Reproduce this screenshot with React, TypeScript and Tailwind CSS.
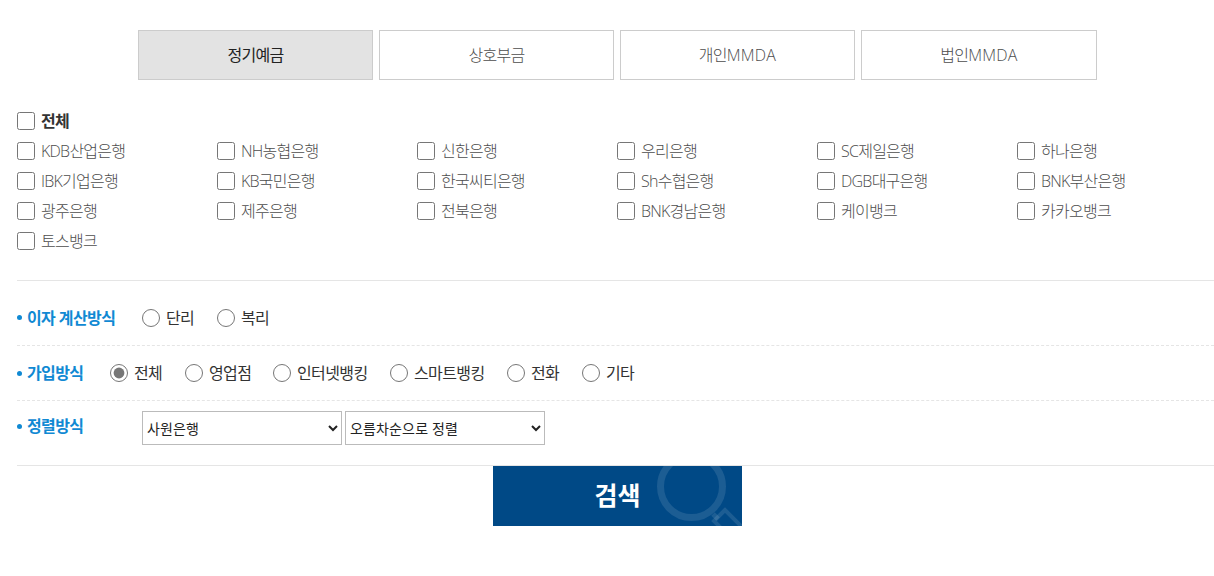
const FONT = "font-['Open_Sans','Noto_Sans_CJK_KR',sans-serif]"

const TABS = [
  { name: '정기예금' },
  { name: '상호부금' },
  { name: '개인', latin: 'MMDA' },
  { name: '법인', latin: 'MMDA' },
]

const BANKS = [
  'KDB산업은행', 'NH농협은행', '신한은행', '우리은행', 'SC제일은행', '하나은행',
  'IBK기업은행', 'KB국민은행', '한국씨티은행', 'Sh수협은행', 'DGB대구은행', 'BNK부산은행',
  '광주은행', '제주은행', '전북은행', 'BNK경남은행', '케이뱅크', '카카오뱅크',
  '토스뱅크',
]

const JOIN_TYPES = [
  { label: '전체', width: 'w-[75px]' },
  { label: '영업점', width: 'w-[88px]' },
  { label: '인터넷뱅킹', width: 'w-[117px]' },
  { label: '스마트뱅킹', width: 'w-[117px]' },
  { label: '전화', width: 'w-[75px]' },
  { label: '기타', width: 'w-[60px]' },
]

function Check({ label, strong }: { label: string; strong?: boolean }) {
  return (
    <label className="flex h-[30px] items-center">
      <input type="checkbox" className="m-0 h-[18px] w-[18px] shrink-0" />
      <span className={strong ? 'ml-[6px] font-bold text-[#333]' : 'ml-[6px] font-light text-[#4d4d4d]'}>{label}</span>
    </label>
  )
}

function Radio({ name, label, width, checked }: { name: string; label: string; width: string; checked?: boolean }) {
  return (
    <label className={`flex items-center ${width}`}>
      <input type="radio" name={name} defaultChecked={checked} className="m-0 h-[18px] w-[18px] shrink-0 accent-[#767676]" />
      <span className="ml-[6px] tracking-[-0.6px] text-[#333]">{label}</span>
    </label>
  )
}

function RowTitle({ children }: { children: string }) {
  return (
    <div className="flex items-center font-bold tracking-[-0.6px] text-[#1089d3]">
      <span className="mr-[5px] h-[5px] w-[5px] rounded-full bg-[#1089d3]" />
      {children}
    </div>
  )
}

export default function App() {
  return (
    <div className={`${FONT} h-[576px] w-[1214px] overflow-hidden bg-white pl-[17px] text-[16px] leading-[24px] tracking-[-0.75px]`}>
      <div className="flex gap-[6px] pl-[121px] pt-[30px]">
        {TABS.map((tab, idx) => (
          <div
            key={tab.name}
            className={`flex h-[50px] items-center justify-center border border-[#ccc] ${
              idx === 0 ? 'w-[235px] bg-[#e3e3e3] text-[#222]' : idx === 3 ? 'w-[236px] font-light text-[#4d4d4d]' : 'w-[235px] font-light text-[#4d4d4d]'
            }`}
          >
            {tab.name}
            {tab.latin && <span className="tracking-[0.2px]">{tab.latin}</span>}
          </div>
        ))}
      </div>

      <div className="mt-[26px] border-b border-[#e5e5e5] pb-[24px]">
        <Check label="전체" strong />
        <div className="grid grid-cols-[repeat(6,200px)]">
          {BANKS.map((bank) => (
            <Check key={bank} label={bank} />
          ))}
        </div>
      </div>

      <div className="flex h-[65px] items-center border-b border-dashed border-[#e5e5e5] pt-[9px]">
        <div className="w-[125px]">
          <RowTitle>이자 계산방식</RowTitle>
        </div>
        <Radio name="calc" label="단리" width="w-[75px]" />
        <Radio name="calc" label="복리" width="w-[75px]" />
      </div>

      <div className="flex h-[55px] items-center border-b border-dashed border-[#e5e5e5]">
        <div className="w-[93px]">
          <RowTitle>가입방식</RowTitle>
        </div>
        {JOIN_TYPES.map((item, idx) => (
          <Radio key={item.label} name="join" label={item.label} width={item.width} checked={idx === 0} />
        ))}
      </div>

      <div className="flex h-[65px] border-b border-[#e5e5e5] pt-[10px]">
        <div className="w-[125px] pt-[3px]">
          <RowTitle>정렬방식</RowTitle>
        </div>
        <select className="h-[34px] w-[200px] border border-[#bbb] text-[14px] tracking-[0.15px] text-[#222]">
          <option>사원은행</option>
        </select>
        <select className="ml-[3px] h-[34px] w-[200px] border border-[#bbb] text-[14px] tracking-[0.15px] text-[#222]">
          <option>오름차순으로 정렬</option>
        </select>
      </div>

      <div className="pl-[476px]">
        <button className="relative flex h-[60px] w-[249px] items-center justify-center overflow-hidden bg-[#004986] text-[25px] font-bold tracking-normal text-white">
          <span className="relative -top-[1px]">검색</span>
          <svg className="absolute left-[164px] top-0" width="85" height="60" viewBox="0 0 85 60" fill="none" stroke="#ffffff" strokeOpacity="0.11">
            <circle cx="34.5" cy="20.5" r="31" strokeWidth="7" />
            <path d="M56 48 L61 53" strokeWidth="5" />
            <path d="M68 44 L57 55 L79 77 L90 66 Z" strokeWidth="4" />
          </svg>
        </button>
      </div>
    </div>
  )
}
